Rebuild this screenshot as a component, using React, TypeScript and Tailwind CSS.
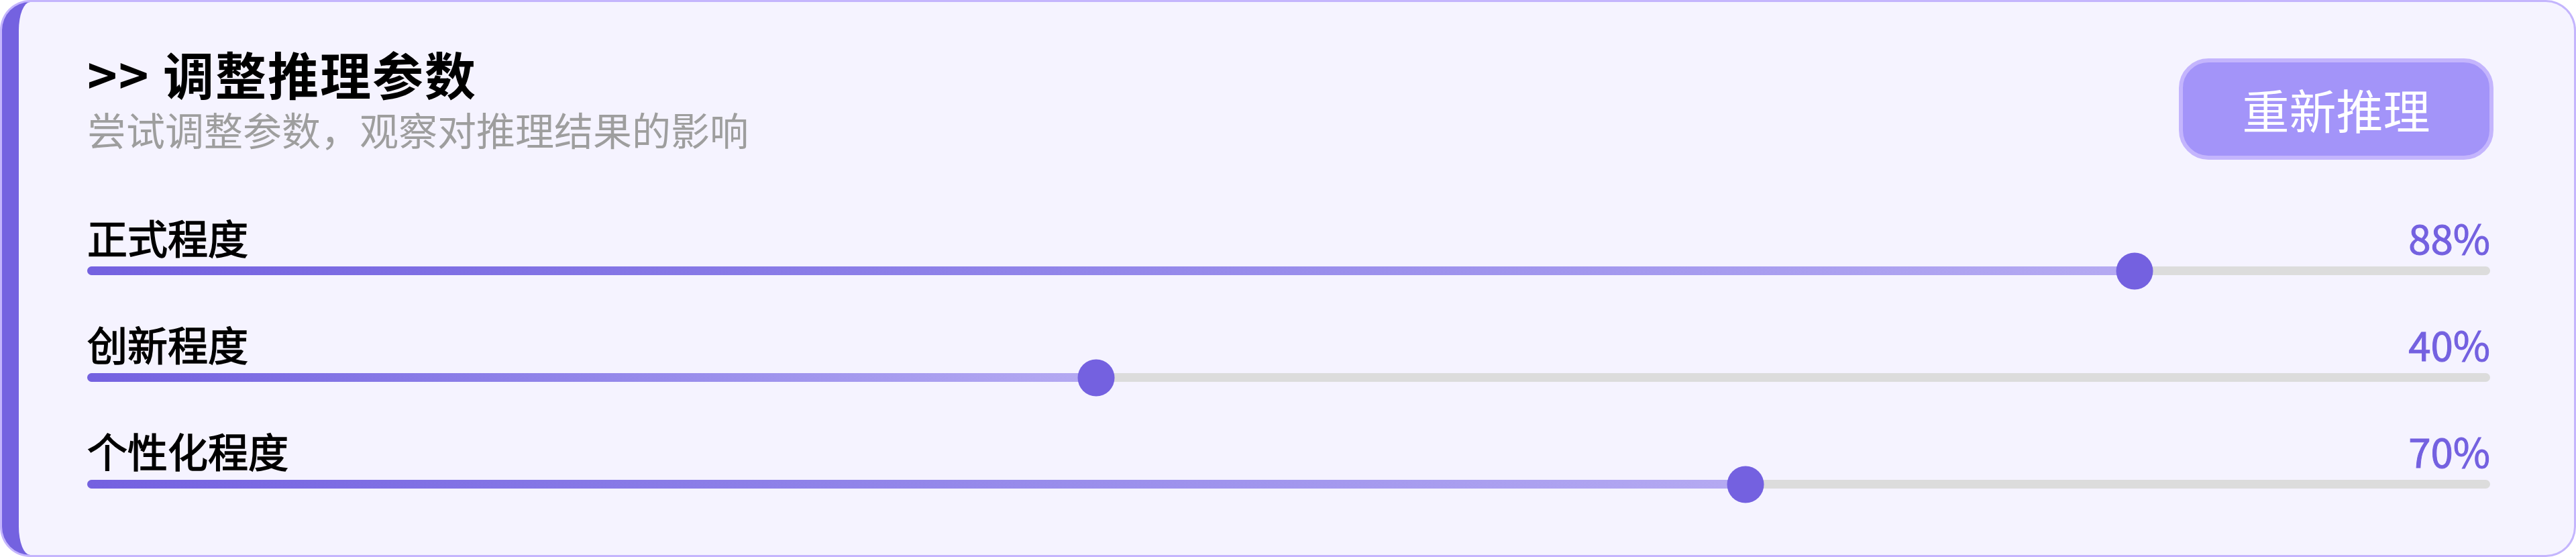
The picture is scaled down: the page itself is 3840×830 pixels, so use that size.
import { useState } from "react";

type Param = { id: string; label: string; value: number };

const PARAMS: Param[] = [
  { id: "formal", label: "正式程度", value: 88 },
  { id: "creative", label: "创新程度", value: 40 },
  { id: "personal", label: "个性化程度", value: 70 },
];

const FONT = { fontFamily: '"Noto Sans CJK SC", "Noto Sans", sans-serif' };

// thumb sits inset from the track ends, so map value -> percent along the track
const thumbPos = (v: number) => 6 + v * 0.9;

function ParamSlider({ label, value }: { label: string; value: number }) {
  const pos = thumbPos(value);
  return (
    <div className="flex flex-col">
      <div className="flex items-center justify-between">
        <span className="text-[60px] leading-[72px] text-black [-webkit-text-stroke:1.5px_#000]">{label}</span>
        <span className="text-[60px] leading-[72px] text-[#7461e0] [-webkit-text-stroke:1px_#7461e0]">{value}%</span>
      </div>
      <div className="relative mt-[8px] h-[13px] rounded-full bg-[#dcdcdc]">
        <div
          className="absolute left-0 top-0 h-full rounded-full bg-gradient-to-r from-[#7461e0] to-[#b5aaf2]"
          style={{ width: `${pos}%` }}
        />
        <div
          className="absolute top-1/2 h-[55px] w-[55px] -translate-x-1/2 -translate-y-1/2 rounded-full bg-[#7461e0]"
          style={{ left: `${pos}%` }}
        />
      </div>
    </div>
  );
}

export default function App() {
  const [params] = useState(PARAMS);

  return (
    <div className="h-[830px] w-full bg-white" style={FONT}>
      <div className="h-full rounded-[45px] bg-[#c4b5fd] p-[3px]">
        <div className="flex h-full flex-col rounded-[42px] border-l-[25px] border-[#7462e0] bg-[#f5f3ff] pl-[102px] pr-[125px] pt-[60px]">
          {/* header */}
          <div className="flex items-start justify-between">
            <div className="flex flex-col">
              <h2 className="text-[76px] leading-[92px] font-bold tracking-[2px] text-black">&gt;&gt; 调整推理参数</h2>
              <p className="mt-[2px] text-[58px] leading-[70px] text-[#9e9e9e]">尝试调整参数，观察对推理结果的影响</p>
            </div>
            <button className="mr-[-5px] mt-[24px] flex h-[151px] w-[469px] items-center justify-center rounded-[44px] border-[6px] border-[#c4b5fd] bg-[#a394f9] text-[70px] leading-none text-white">
              重新推理
            </button>
          </div>

          {/* sliders */}
          <div className="mt-[79px] flex flex-col gap-[66px]">
            {params.map(p => (
              <ParamSlider key={p.id} label={p.label} value={p.value} />
            ))}
          </div>
        </div>
      </div>
    </div>
  );
}
